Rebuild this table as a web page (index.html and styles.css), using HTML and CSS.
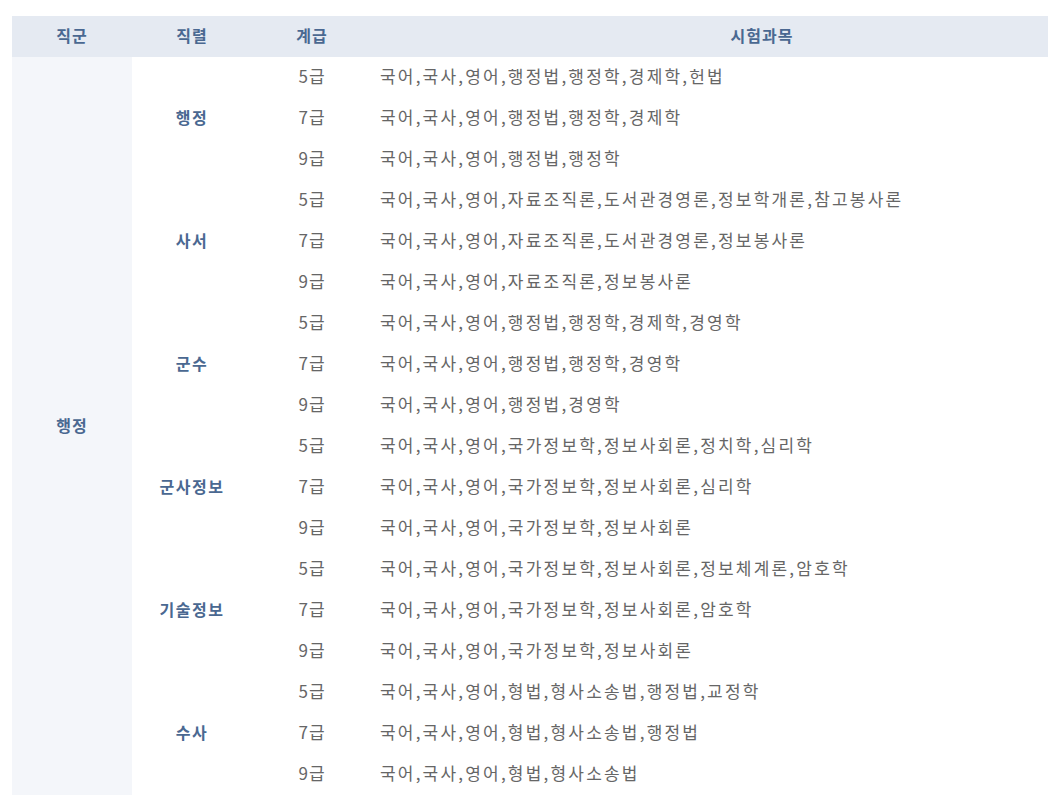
FILE: index.html
```html
<!DOCTYPE html>
<html lang="ko">
<head>
<meta charset="utf-8">
<link rel="stylesheet" href="styles.css">
</head>
<body>
<div class="wrap">
<table class="exam">
<colgroup><col class="c1"><col class="c2"><col class="c3"><col class="c4"></colgroup>
<thead>
<tr><th>직군</th><th>직렬</th><th>계급</th><th>시험과목</th></tr>
</thead>
<tbody>
<tr><td class="group" rowspan="18">행정</td><td class="series" rowspan="3">행정</td><td class="grade">5급</td><td class="subj">국어,국사,영어,행정법,행정학,경제학,헌법</td></tr>
<tr><td class="grade">7급</td><td class="subj">국어,국사,영어,행정법,행정학,경제학</td></tr>
<tr><td class="grade">9급</td><td class="subj">국어,국사,영어,행정법,행정학</td></tr>
<tr><td class="series" rowspan="3">사서</td><td class="grade">5급</td><td class="subj">국어,국사,영어,자료조직론,도서관경영론,정보학개론,참고봉사론</td></tr>
<tr><td class="grade">7급</td><td class="subj">국어,국사,영어,자료조직론,도서관경영론,정보봉사론</td></tr>
<tr><td class="grade">9급</td><td class="subj">국어,국사,영어,자료조직론,정보봉사론</td></tr>
<tr><td class="series" rowspan="3">군수</td><td class="grade">5급</td><td class="subj">국어,국사,영어,행정법,행정학,경제학,경영학</td></tr>
<tr><td class="grade">7급</td><td class="subj">국어,국사,영어,행정법,행정학,경영학</td></tr>
<tr><td class="grade">9급</td><td class="subj">국어,국사,영어,행정법,경영학</td></tr>
<tr><td class="series" rowspan="3">군사정보</td><td class="grade">5급</td><td class="subj">국어,국사,영어,국가정보학,정보사회론,정치학,심리학</td></tr>
<tr><td class="grade">7급</td><td class="subj">국어,국사,영어,국가정보학,정보사회론,심리학</td></tr>
<tr><td class="grade">9급</td><td class="subj">국어,국사,영어,국가정보학,정보사회론</td></tr>
<tr><td class="series" rowspan="3">기술정보</td><td class="grade">5급</td><td class="subj">국어,국사,영어,국가정보학,정보사회론,정보체계론,암호학</td></tr>
<tr><td class="grade">7급</td><td class="subj">국어,국사,영어,국가정보학,정보사회론,암호학</td></tr>
<tr><td class="grade">9급</td><td class="subj">국어,국사,영어,국가정보학,정보사회론</td></tr>
<tr><td class="series" rowspan="3">수사</td><td class="grade">5급</td><td class="subj">국어,국사,영어,형법,형사소송법,행정법,교정학</td></tr>
<tr><td class="grade">7급</td><td class="subj">국어,국사,영어,형법,형사소송법,행정법</td></tr>
<tr><td class="grade">9급</td><td class="subj">국어,국사,영어,형법,형사소송법</td></tr>
</tbody>
</table>
</div>
</body>
</html>
```
FILE: styles.css
```css
html, body {
  margin: 0;
  padding: 0;
  overflow: hidden;
  background: #fff;
}
.wrap {
  padding: 16px 0 0 12px;
  overflow: hidden;
}
.exam {
  border-collapse: collapse;
  table-layout: fixed;
  width: 1140px;
  font-family: "Noto Sans CJK KR", "Noto Sans", sans-serif;
}
.c1, .c2, .c3 { width: 120px; }
.c4 { width: 780px; }
.exam th {
  background: #e5eaf2;
  color: #4a6891;
  font-size: 16px;
  font-weight: bold;
  height: 38px;
  padding: 0 0 3px 0;
  line-height: 20px;
  text-align: center;
  letter-spacing: 1px;
}
.exam td {
  height: 38px;
  padding: 0 0 3px 0;
  line-height: 20px;
  vertical-align: middle;
}
.exam .group {
  background: #f4f6fa;
  color: #4a6891;
  font-size: 16px;
  font-weight: bold;
  text-align: center;
  letter-spacing: 1px;
}
.exam .series {
  color: #4a6891;
  font-size: 16px;
  font-weight: bold;
  text-align: center;
  letter-spacing: 1.5px;
}
.exam .grade {
  color: #666;
  font-size: 17px;
  text-align: center;
  letter-spacing: 1px;
}
.exam .subj {
  color: #666;
  font-size: 17px;
  text-align: left;
  padding-left: 8px;
  letter-spacing: 2.2px;
}
```
